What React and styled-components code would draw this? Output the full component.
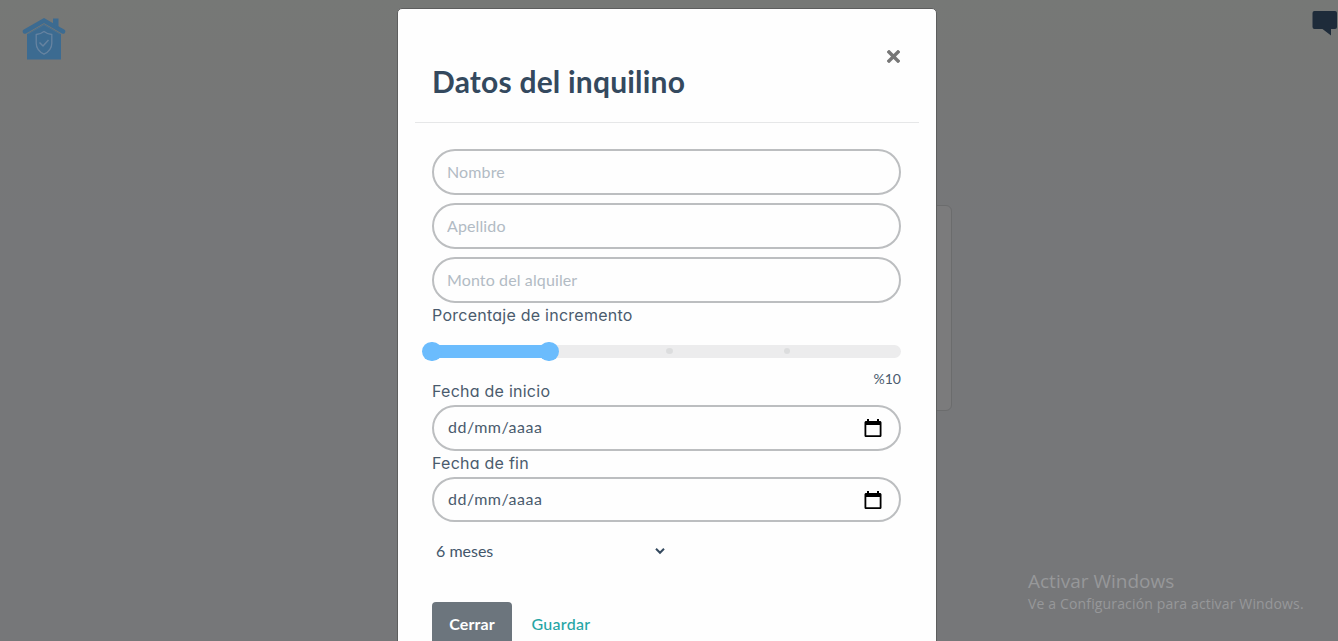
import React from "react";
import styled, { createGlobalStyle } from "styled-components";

const GlobalStyle = createGlobalStyle`
  *, *::before, *::after { box-sizing: border-box; }
  body { margin: 0; font-family: Lato, sans-serif; font-size: 16px; color: #34495e; }
`;

const Page = styled.div`
  position: relative;
  height: 641px;
  overflow: hidden;
  background: linear-gradient(#767876 0, #767776 50px, #767779 220px, #767779 100%);
`;

const TopBar = styled.header`
  display: flex;
  justify-content: space-between;
  align-items: flex-start;
  padding: 11px 0 0 22px;
`;

const HouseLogo = styled.svg`
  display: block;
  width: 44px;
  height: 44px;
  margin-top: 6px;
`;

const ChatIcon = styled.svg`
  display: block;
  width: 26px;
  height: 25px;
`;

const BackCard = styled.section`
  width: 400px;
  height: 206px;
  margin: 144px 0 0 552px;
  border: 1px solid #6b6c6d;
  border-radius: 6px;
  background: #7b7b7c;
`;

const Watermark = styled.aside`
  position: absolute;
  left: 1028px;
  top: 568px;
  color: #97989a;
  font-family: "Open Sans", sans-serif;
  white-space: nowrap;
`;

const WatermarkTitle = styled.div`
  font-size: 19px;
  line-height: 26px;
`;

const WatermarkText = styled.div`
  font-size: 14px;
  line-height: 20px;
  letter-spacing: 0.15px;
`;

const Overlay = styled.div`
  position: absolute;
  inset: 0;
  display: flex;
  justify-content: center;
  align-items: flex-start;
  padding: 8px 4px 0 0;
`;

const Modal = styled.div`
  width: 540px;
  height: 720px;
  flex: none;
  padding: 16px 17px;
  border: 1px solid #5d5e5e;
  border-radius: 5px;
  background: #fefefe;
`;

const ModalHeader = styled.div`
  display: flex;
  justify-content: space-between;
  align-items: flex-start;
  height: 98px;
  padding: 16px 16px 0 17px;
  border-bottom: 1px solid #e6e7e8;
`;

const Title = styled.h2`
  margin: 21px 0 0;
  font-size: 30px;
  line-height: 38px;
  font-weight: 700;
  letter-spacing: 0.2px;
  white-space: nowrap;
  color: #34495e;
`;

const CloseButton = styled.button`
  margin: 9px 3px 0 0;
  padding: 0;
  border: 0;
  background: none;
  line-height: 0;
`;

const Form = styled.form`
  display: flex;
  flex-direction: column;
  padding: 26px 17px 0;
`;

const TextInput = styled.input`
  width: 469px;
  height: 46px;
  margin: 0 0 8px;
  padding: 0 13px 2px;
  border: 2px solid #bcbec0;
  border-radius: 23px;
  background: #fefefe;
  font: 400 16px Lato, sans-serif;
  letter-spacing: 0.12px;
  outline: none;
  &::placeholder { color: #b2bbc4; opacity: 1; }
`;

const Label = styled.label`
  height: 24px;
  margin-top: ${(p) => p.$top || "0"};
  font: 400 16px/24px Inter, sans-serif;
  font-feature-settings: "cv11";
  letter-spacing: 0.25px;
  color: #4a5b6d;
  white-space: nowrap;
`;

const Track = styled.div`
  position: relative;
  width: 469px;
  height: 13px;
  margin-top: 18px;
  border-radius: 7px;
  background: #ececed;
`;

const Range = styled.div`
  width: 118px;
  height: 13px;
  background: #6bbcfd;
`;

const Knob = styled.span`
  position: absolute;
  left: ${(p) => p.$x}px;
  top: -3px;
  width: 20px;
  height: 19px;
  border-radius: 10px;
  background: #6bbcfd;
`;

const Tick = styled.span`
  position: absolute;
  left: ${(p) => p.$x}px;
  top: 3px;
  width: ${(p) => p.$size};
  height: 6px;
  border-radius: 50%;
  background: #dcddde;
`;

const Percentage = styled.output`
  width: 469px;
  height: 20px;
  margin-top: 11px;
  text-align: right;
  font-size: 14px;
  line-height: 20px;
  color: #4a5b6d;
`;

const DateField = styled.div`
  display: flex;
  justify-content: space-between;
  align-items: center;
  width: 469px;
  height: ${(p) => p.$height};
  margin-top: 2px;
  padding: 0 16px 2px 14px;
  border: 2px solid #bcbec0;
  border-radius: 23px;
  color: #4a5b6d;
`;

const DateText = styled.span`
  margin-bottom: 1px;
  letter-spacing: 0.5px;
`;

const CalendarIcon = styled.svg`
  display: block;
  width: 20px;
  height: 20px;
  margin-top: 2px;
`;

const Duration = styled.div`
  display: flex;
  justify-content: space-between;
  align-items: center;
  width: 234px;
  height: 24px;
  margin-top: 16px;
  padding-left: 4px;
  color: #43566a;
`;

const Chevron = styled.svg`
  display: block;
  width: 12px;
  height: 8px;
  margin-top: 2px;
`;

const Actions = styled.div`
  display: flex;
  margin-top: 40px;
`;

const Button = styled.button`
  width: ${(p) => (p.$primary ? "80px" : "98px")};
  height: 44px;
  padding: 0 0 2px;
  border: 0;
  border-radius: 4px;
  background: ${(p) => (p.$primary ? "#6c757d" : "transparent")};
  color: ${(p) => (p.$primary ? "#fff" : "#26a5a5")};
  font: ${(p) => (p.$primary ? 700 : 500)} 16px Lato, sans-serif;
  letter-spacing: ${(p) => (p.$primary ? "0.1px" : "0.3px")};
`;

const Calendar = () => (
  <CalendarIcon viewBox="0 0 20 20">
    <path
      fillRule="evenodd"
      d="M4 1h2v2h8V1h2v2h.8c1 0 1.700.7 1.700 1.600v12.800c0 .9-.7 1.600-1.700 1.600H3.200c-1 0-1.700-.7-1.700-1.600V4.600C1.500 3.700 2.200 3 3.200 3H4zM3.300 7v10.200h13.400V7z"
    />
  </CalendarIcon>
);

export default function App() {
  return (
    <>
      <GlobalStyle />
      <Page>
        <TopBar>
          <HouseLogo viewBox="0 0 44 44">
            <path d="M5 17 22 7l17 10v25.500H5z" fill="#3c6b91" />
            <path d="m3 14.500 19-11 19 11" fill="none" stroke="#3c6b91" strokeWidth="4.500" strokeLinecap="round" />
            <path d="M31 1.500h5.500V11L31 8z" fill="#3c6b91" />
            <path d="m6 17 16-9.200L38 17" fill="none" stroke="#55748c" strokeWidth=".7" />
            <path d="M22 14.500c2.600 2 5 2.700 7.800 3v8.700c0 5-3 8.500-7.800 11-4.800-2.500-7.800-6-7.800-11v-8.700c2.800-.3 5.200-1 7.800-3z" fill="none" stroke="#6683a0" strokeWidth="1.300" />
            <path d="m17.500 25.500 3.500 3.500 5.500-6" fill="none" stroke="#6683a0" strokeWidth="1.500" />
          </HouseLogo>
          <ChatIcon viewBox="0 0 26 25">
            <path d="M2.500 0H23q2 0 2 2v14q0 2-2 2h-4v6.500L10.500 18h-8q-2 0-2-2V2q0-2 2-2z" fill="#1e2b3a" />
          </ChatIcon>
        </TopBar>
        <BackCard />
        <Watermark>
          <WatermarkTitle>Activar Windows</WatermarkTitle>
          <WatermarkText>Ve a Configuración para activar Windows.</WatermarkText>
        </Watermark>
        <Overlay>
          <Modal>
            <ModalHeader>
              <Title>Datos del inquilino</Title>
              <CloseButton aria-label="Cerrar">
                <svg width="13" height="13" viewBox="0 0 13 13">
                  <path d="m2 2 9 9m0-9-9 9" stroke="#777" strokeWidth="3.400" strokeLinecap="square" />
                </svg>
              </CloseButton>
            </ModalHeader>
            <Form>
              <TextInput placeholder="Nombre" />
              <TextInput placeholder="Apellido" />
              <TextInput placeholder="Monto del alquiler" />
              <Label $top="-8px">Porcentaje de incremento</Label>
              <Track>
                <Range />
                <Knob $x={-10} />
                <Knob $x={107} />
                <Tick $x={234} $size="7px" />
                <Tick $x={352} $size="6px" />
              </Track>
              <Percentage>%10</Percentage>
              <Label $top="-10px">Fecha de inicio</Label>
              <DateField $height="46px">
                <DateText>dd/mm/aaaa</DateText>
                <Calendar />
              </DateField>
              <Label>Fecha de fin</Label>
              <DateField $height="45px">
                <DateText>dd/mm/aaaa</DateText>
                <Calendar />
              </DateField>
              <Duration>
                <span>6 meses</span>
                <Chevron viewBox="0 0 12 8">
                  <path d="m2 1.800 4 4 4-4" fill="none" stroke="#34495e" strokeWidth="2" />
                </Chevron>
              </Duration>
              <Actions>
                <Button type="button" $primary>Cerrar</Button>
                <Button type="button">Guardar</Button>
              </Actions>
            </Form>
          </Modal>
        </Overlay>
      </Page>
    </>
  );
}
